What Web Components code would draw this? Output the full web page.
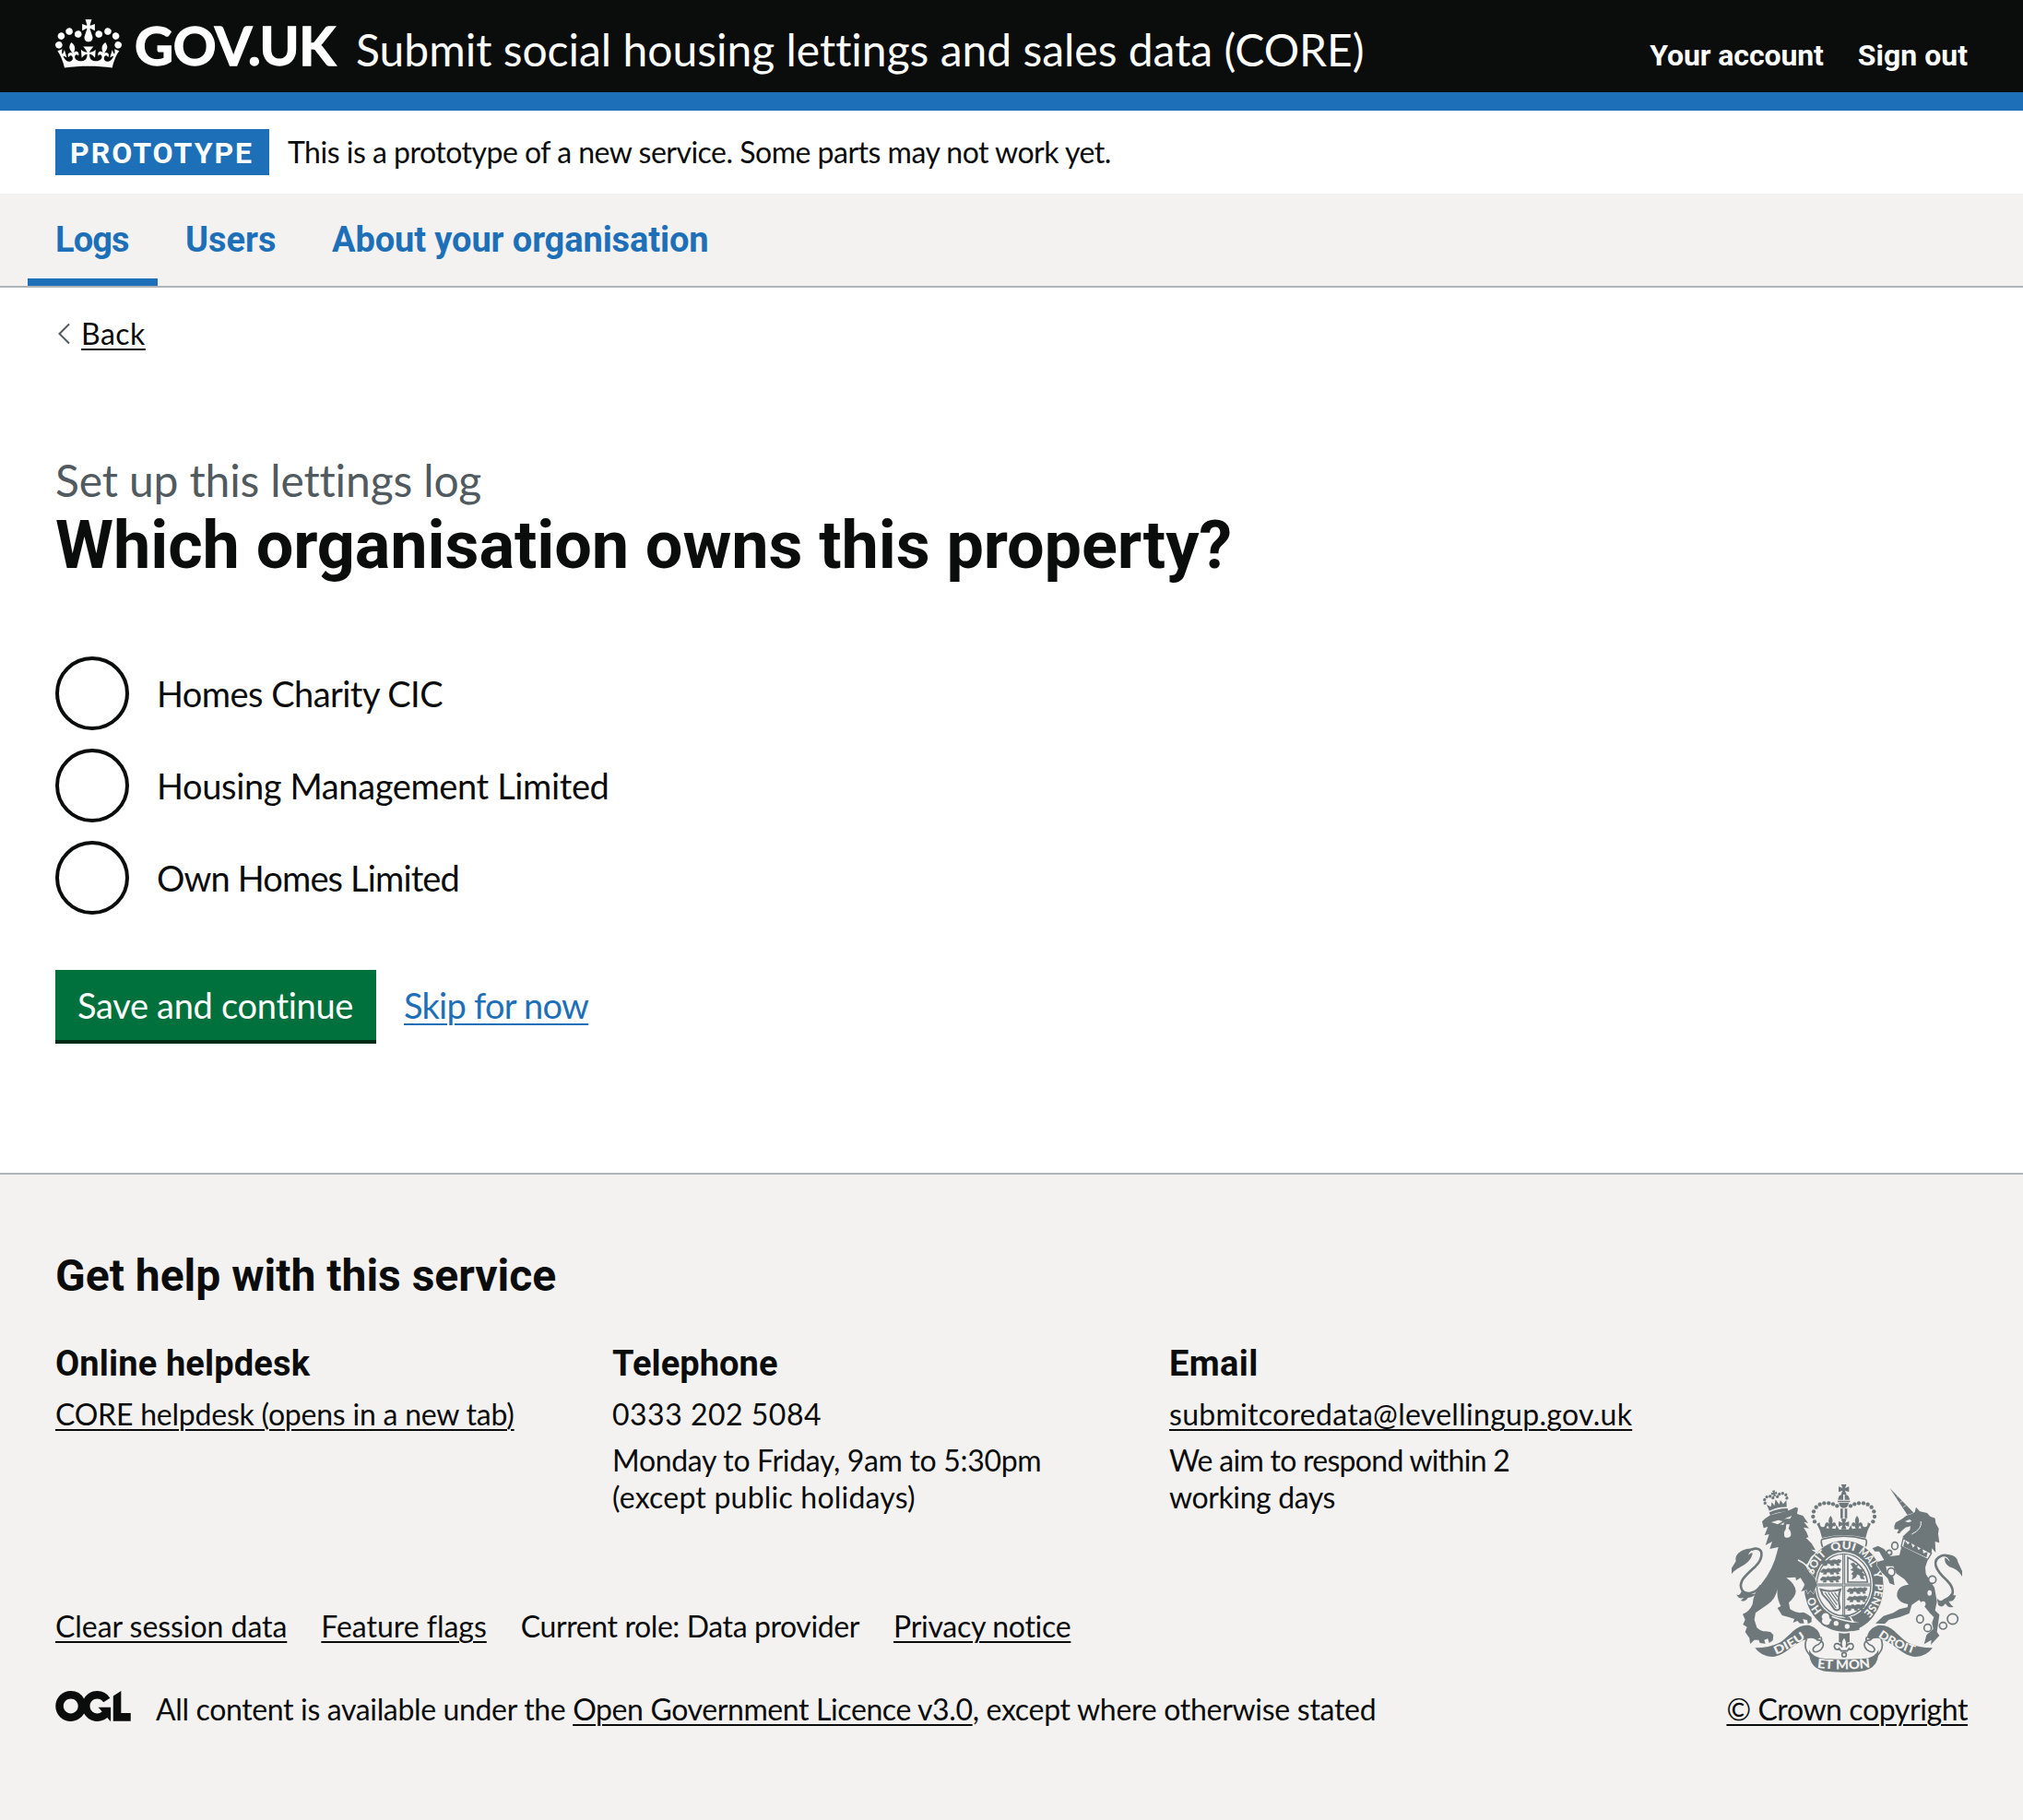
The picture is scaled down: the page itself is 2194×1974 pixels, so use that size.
<!DOCTYPE html>
<html lang="en">
<head>
<meta charset="utf-8">
<title>Which organisation owns this property?</title>
<style>
  html, body { margin: 0; }
  body { background: #fff; color: #0b0c0c; font-family: Lato, Roboto, sans-serif; font-size: 32px; line-height: 40px; font-variant-ligatures: none; }
</style>
</head>
<body>
<core-page></core-page>

<template id="tpl-page">
  <style>
    :host { display: flex; flex-direction: column; min-height: 1974px; }
    main { box-sizing: border-box; height: 960px; padding: 0 60px; display: flex; flex-direction: column; align-items: flex-start; }
    .back { display: flex; align-items: center; gap: 11px; margin-top: 30px; padding-left: 2px; }
    .caption { margin-top: 109px; font-size: 48px; line-height: 60px; letter-spacing: -.15px; color: #505a5f; }
    h1 { margin: 1px 0 0; font: 700 72px/80px Roboto, sans-serif; letter-spacing: -.08px; }
    .radios { display: flex; flex-direction: column; gap: 20px; margin-top: 80px; }
    .actions { display: flex; gap: 30px; margin-top: 60px; align-items: flex-start; }
    button { box-sizing: border-box; width: 348px; height: 80px; margin: 0; padding: 0 1px 1px 0; border: 0; border-bottom: 4px solid #002d18; background: #00703c; color: #fff; font: 38px/50px Lato, sans-serif; letter-spacing: -.3px; }
    .skip { font-size: 38px; line-height: 50px; margin-top: 13px; }
  </style>
  <core-header></core-header>
  <phase-banner tag="PROTOTYPE">This is a prototype of a new service. Some parts may not work yet.</phase-banner>
  <primary-nav></primary-nav>
  <main>
    <div class="back">
      <svg width="15" height="24" viewBox="0 0 15 24"><path d="M13 1.5 2.5 12 13 22.5" fill="none" stroke="#505a5f" stroke-width="2"/></svg>
      <text-link style="letter-spacing:.5px">Back</text-link>
    </div>
    <div class="caption">Set up this lettings log</div>
    <h1>Which organisation owns this property?</h1>
    <div class="radios">
      <radio-item style="letter-spacing:-.55px">Homes Charity CIC</radio-item>
      <radio-item style="letter-spacing:-.37px">Housing Management Limited</radio-item>
      <radio-item style="letter-spacing:-.86px">Own Homes Limited</radio-item>
    </div>
    <div class="actions">
      <button type="button">Save and continue</button>
      <text-link class="skip" style="letter-spacing:-.74px;color:#1d70b8;--offset:5px">Skip for now</text-link>
    </div>
  </main>
  <core-footer></core-footer>
</template>

<template id="tpl-header">
  <style>
    :host { box-sizing: border-box; display: flex; align-items: flex-start; height: 120px; padding: 0 60px; background: #0b0c0c; border-bottom: 20px solid #1d70b8; color: #fff; }
    .crown { margin-top: 21px; }
    .logo { margin: 19px 0 0 14px; width: 222px; font-size: 58px; line-height: 60px; font-weight: 700; letter-spacing: -.3px; -webkit-text-stroke: 1.4px #fff; white-space: nowrap; }
    .name { margin: 24px 0 0 18px; font-size: 48px; line-height: 60px; white-space: nowrap; letter-spacing: -.01px; }
    nav { display: flex; margin: 40px 0 0 auto; gap: 37px; font-family: Roboto, sans-serif; font-weight: 700; }
  </style>
  <svg class="crown" width="72" height="53" viewBox="0 0 132 97"><path fill="#fff" d="M25 30.2c3.5 1.5 7.7-.2 9.1-3.7 1.5-3.6-.2-7.8-3.9-9.2-3.6-1.4-7.6.3-9.1 3.9-1.4 3.5.3 7.5 3.9 9zM9 39.5c3.6 1.5 7.8-.2 9.2-3.7 1.5-3.6-.2-7.8-3.9-9.1-3.6-1.5-7.6.2-9.1 3.8-1.4 3.5.3 7.5 3.8 9zM4.4 57.2c3.5 1.5 7.7-.2 9.1-3.8 1.5-3.6-.2-7.7-3.9-9.1-3.5-1.5-7.6.3-9.1 3.8-1.4 3.5.3 7.6 3.9 9.1zm38.3-21.4c3.5 1.5 7.7-.2 9.1-3.8 1.5-3.6-.2-7.7-3.9-9.1-3.6-1.5-7.6.3-9.1 3.8-1.3 3.6.4 7.7 3.9 9.1zm64.4-5.6c-3.6 1.5-7.8-.2-9.1-3.7-1.5-3.6.2-7.8 3.8-9.2 3.6-1.4 7.7.3 9.2 3.9 1.3 3.5-.4 7.5-3.9 9zm15.9 9.3c-3.6 1.5-7.7-.2-9.1-3.7-1.5-3.6.2-7.8 3.7-9.1 3.6-1.5 7.7.2 9.2 3.8 1.5 3.5-.3 7.5-3.8 9zm4.7 17.7c-3.6 1.5-7.8-.2-9.2-3.8-1.5-3.6.2-7.7 3.9-9.1 3.6-1.5 7.7.3 9.2 3.8 1.3 3.5-.4 7.6-3.9 9.1zM89.3 35.8c-3.6 1.5-7.8-.2-9.2-3.8-1.4-3.6.2-7.7 3.9-9.1 3.6-1.5 7.7.3 9.2 3.8 1.4 3.6-.3 7.7-3.9 9.1zM69.7 17.7l8.9 4.7V9.3l-8.9 2.8c-.2-.3-.5-.6-.9-.9L72.4 0H59.6l3.5 11.2c-.3.3-.6.5-.9.9l-8.8-2.8v13.1l8.8-4.7c.3.3.6.7.9.9l-5 15.4v.1c-.2.8-.4 1.6-.4 2.4 0 4.1 3.1 7.5 7 8.1h.2c.3 0 .7.1 1 .1.4 0 .7 0 1-.1h.2c4-.6 7.1-4.1 7.1-8.1 0-.8-.1-1.7-.4-2.4V34l-5.1-15.4c.4-.2.7-.6 1-.9zM66 92.8c16.9 0 32.8 1.1 47.1 3.2 4-16.9 8.9-26.7 14-33.5l-9.6-3.4c1 4.9 1.1 7.2 0 10.2-1.5-1.4-3-4.3-4.2-8.7L108.6 76c2.8-2 5-3.2 7.5-3.3-4.4 9.4-10 11.9-13.6 11.2-4.3-.8-6.3-4.6-5.6-7.9 1-4.7 5.7-5.9 8-.5 4.3-8.7-3-11.4-7.6-8.8 7.1-7.2 7.9-13.5 2.1-21.1-8 6.1-8.1 12.3-4.5 20.8-4.7-5.4-12.1-2.5-9.5 6.2 3.4-5.2 7.9-2 7.2 3.1-.6 4.3-6.4 7.8-13.5 7.2-10.3-.9-10.9-8-11.2-13.8 2.5-.5 7.1 1.8 11 7.3L80.2 60c-4.1 4.4-8 5.3-12.3 5.4 1.4-4.4 8-11.6 8-11.6H55.5s6.4 7.2 7.9 11.6c-4.2-.1-8-1-12.3-5.4l1.4 16.4c3.9-5.5 8.5-7.7 10.9-7.3-.3 5.8-.9 12.8-11.1 13.8-7.2.6-12.9-2.9-13.5-7.2-.7-5 3.8-8.3 7.1-3.1 2.7-8.7-4.6-11.6-9.4-6.2 3.7-8.5 3.6-14.7-4.6-20.8-5.8 7.6-5 13.9 2.2 21.1-4.7-2.6-11.9.1-7.7 8.8 2.3-5.5 7.1-4.2 8.1.5.7 3.3-1.3 7.1-5.7 7.9-3.5.7-9-1.8-13.5-11.2 2.5.1 4.7 1.3 7.5 3.3l-4.7-15.4c-1.2 4.4-2.7 7.2-4.3 8.7-1.1-3-.9-5.3 0-10.2l-9.5 3.4c5 6.9 9.9 16.7 14 33.5 14.8-2.1 30.8-3.2 47.7-3.2z"/></svg>
  <span class="logo">GOV.UK</span>
  <span class="name">Submit social housing lettings and sales data (CORE)</span>
  <nav><span style="letter-spacing:-.1px">Your account</span><span>Sign out</span></nav>
</template>

<template id="tpl-phase">
  <style>
    :host { box-sizing: border-box; display: flex; align-items: flex-start; height: 90px; padding: 20px 60px; gap: 20px; }
    strong { box-sizing: border-box; width: 232px; height: 50px; padding: 1px 0 0 16px; background: #1d70b8; color: #fff; font-family: Roboto, sans-serif; line-height: 50px; letter-spacing: 2px; }
    .text { padding-top: 1px; line-height: 48px; letter-spacing: -.5px; }
  </style>
  <strong></strong><span class="text"><slot></slot></span>
</template>

<template id="tpl-nav">
  <style>
    :host { box-sizing: border-box; display: flex; height: 102px; padding-left: 30px; background: #f3f2f1; border-bottom: 2px solid #b1b4b6; color: #1d70b8; font: 700 38px/50px Roboto, sans-serif; }
    span { box-sizing: border-box; height: 100px; padding: 25px 0 0 30px; white-space: nowrap; }
    .on { border-bottom: 8px solid #1d70b8; }
  </style>
  <span class="on" style="width:141px;letter-spacing:-.9px">Logs</span>
  <span style="width:159px">Users</span>
  <span style="letter-spacing:-.1px">About your organisation</span>
</template>

<template id="tpl-link">
  <style>
    :host { display: inline-block; white-space: nowrap; }
    a { color: inherit; text-decoration: underline; text-decoration-thickness: 2px; text-underline-offset: var(--offset, 4px); }
  </style>
  <a><slot></slot></a>
</template>

<template id="tpl-radio">
  <style>
    :host { display: flex; align-items: center; gap: 30px; height: 80px; font-size: 38px; line-height: 50px; white-space: nowrap; }
    i { box-sizing: border-box; width: 80px; height: 80px; border: 4px solid #0b0c0c; border-radius: 50%; }
  </style>
  <i></i><span><slot></slot></span>
</template>

<template id="tpl-help">
  <style>
    :host { display: flex; flex-direction: column; }
    h3 { margin: 0 0 10px; font: 700 38px/50px Roboto, sans-serif; }
    .lines { display: flex; flex-direction: column; align-items: flex-start; white-space: nowrap; }
  </style>
  <h3></h3>
  <div class="lines"><slot></slot></div>
</template>

<template id="tpl-footer">
  <style>
    :host { box-sizing: border-box; display: flex; flex-direction: column; flex: 1; padding: 0 60px; background: #f3f2f1; border-top: 2px solid #b1b4b6; white-space: nowrap; }
    h2 { margin: 80px 0 40px; font: 700 48px/60px Roboto, sans-serif; }
    .cols { display: grid; grid-template-columns: 604px 604px 1fr; height: 160px; }
    .gap { height: 10px; }
    .meta { display: flex; justify-content: space-between; align-items: flex-end; height: 260px; }
    .left { display: flex; flex-direction: column; }
    .links { display: flex; gap: 37px; margin-bottom: 50px; }
    .licence { display: flex; align-items: flex-start; gap: 27px; }
    .right { display: flex; flex-direction: column; align-items: flex-end; }
    .right royal-arms { margin: 0 6px 20px 0; }
  </style>
  <h2>Get help with this service</h2>
  <div class="cols">
    <help-column heading="Online helpdesk" spacing=".15px">
      <text-link style="letter-spacing:-.22px">CORE helpdesk (opens in a new tab)</text-link>
    </help-column>
    <help-column heading="Telephone" spacing=".08px">
      <span style="letter-spacing:.5px">0333 202 5084</span><div class="gap"></div>
      <span style="letter-spacing:-.32px">Monday to Friday, 9am to 5:30pm</span>
      <span style="letter-spacing:.21px">(except public holidays)</span>
    </help-column>
    <help-column heading="Email" spacing=".4px">
      <text-link style="letter-spacing:.29px">submitcoredata@levellingup.gov.uk</text-link><div class="gap"></div>
      <span style="letter-spacing:-.72px">We aim to respond within 2</span>
      <span style="letter-spacing:-.4px">working days</span>
    </help-column>
  </div>
  <div class="meta">
    <div class="left">
      <div class="links">
        <text-link style="letter-spacing:-.05px">Clear session data</text-link>
        <text-link style="letter-spacing:-.03px">Feature flags</text-link>
        <span style="letter-spacing:-.4px">Current role: Data provider</span>
        <text-link style="letter-spacing:-.28px">Privacy notice</text-link>
      </div>
      <div class="licence">
        <svg width="82" height="33" viewBox="0 0 483.2 195.7"><path fill="#0b0c0c" d="M421.5 142.8V.1l-50.7 32.3v161.1h112.4v-50.7zm-122.3-9.6A47.12 47.12 0 0 1 221 97.8c0-26 21.1-47.1 47.1-47.1 16.7 0 31.4 8.7 39.7 21.8l42.7-27.2A97.63 97.63 0 0 0 268.1 0c-36.5 0-68.3 20.1-85.1 49.7A98 98 0 0 0 97.8 0C43.9 0 0 43.9 0 97.8s43.9 97.8 97.8 97.8c36.5 0 68.3-20.1 85.1-49.7a97.76 97.76 0 0 0 149.6 25.4l19.4 22.2h3v-87.8h-80l24.3 27.5zM97.8 145c-26 0-47.1-21.1-47.1-47.1s21.1-47.1 47.1-47.1 47.1 21.1 47.1 47.1S123.8 145 97.8 145"/></svg>
        <span><span style="letter-spacing:-.35px">All content is available under the </span><text-link style="letter-spacing:-.39px">Open Government Licence v3.0</text-link><span style="letter-spacing:-.29px">, except where otherwise stated</span></span>
      </div>
    </div>
    <div class="right">
      <royal-arms></royal-arms>
      <text-link style="letter-spacing:-.4px">© Crown copyright</text-link>
    </div>
  </div>
</template>

<template id="tpl-arms">
  <style>
    :host { display: block; width: 250px; height: 204px; }
    svg { display: block; }
    text { font-family: Lato, sans-serif; font-weight: 900; }
  </style>
  <svg width="250" height="204" viewBox="54 60 750 612">
    <defs>
      <path id="ring" d="M419 503A102 116 0 0 1 419 271A102 116 0 0 1 419 503"/>
      <path id="dieu" d="M198 614Q248 594 302 554"/>
      <path id="droit" d="M530 555Q580 592 658 615"/>
      <path id="mon" d="M332 657Q420 667 510 655"/>
      <path id="cross" d="M-9-17h18L4-4 17-9V9L4 4 9 17H-9L-4 4-17 9V-9L-4-4z"/>
      <path id="lily" d="M0-22C8-12 8-4 4 5C8-3 18-2 17 7C16 14 10 14 8 10C8 15 5 16 4 20H-4C-5 16-8 15-8 10C-10 14-16 14-17 7C-18-2-8-3-4 5C-8-4-8-12 0-22z"/>
      <path id="beast" d="M-33 3L-25-6-14-4-8-8 0-5 10-8 20-6 24-9 33-6 30 2 24 3 28 10 20 11 18 5 8 5 10 11 0 11-2 5-12 4-14 11-24 11-20 4-28 6z"/>
    </defs>
    <g fill="#6e787b">
      <!-- central crown -->
      <use href="#cross" x="419" y="76"/>
      <path d="M400 110Q401 92 417 92V110zM422 92Q437 94 438 110H422zM399 113H439V118H399zM403 120H435Q433 137 419 137Q405 137 403 120zM408 139H416V170H408zM422 139H430V170H422z"/>
      <use href="#cross" x="419" y="189"/><use href="#lily" x="376" y="184"/><use href="#lily" x="462" y="184"/>
      <g id="beads"><circle cx="324" cy="181" r="6.5"/><circle cx="319" cy="165" r="6.5"/><circle cx="321" cy="148" r="6.5"/><circle cx="329" cy="134" r="6.5"/><circle cx="341" cy="125" r="6.5"/><circle cx="355" cy="121" r="6.5"/><circle cx="370" cy="121" r="6.5"/><circle cx="384" cy="124" r="6.5"/><circle cx="397" cy="130" r="6.5"/></g>
      <use href="#beads" transform="matrix(-1 0 0 1 838 0)"/>
      <path d="M331 188L341 184Q340 199 351 199Q359 198 358 189Q367 194 362 203Q376 201 391 205Q397 197 391 190Q399 194 404 207H434Q440 194 447 190Q441 197 447 205Q462 201 476 203Q471 194 480 189Q479 198 487 199Q498 199 497 184L507 188Q494 210 490 234Q419 216 348 234Q344 210 331 188z"/>
      <path d="M350 238Q419 219 488 238Q497 241 490 262M350 238Q341 241 350 264" fill="none" stroke="#6e787b" stroke-width="5"/>
      <!-- garter -->
      <ellipse cx="419" cy="391" rx="129" ry="148"/>
    </g>
    <ellipse cx="419" cy="387" rx="94" ry="107" fill="#f3f2f1"/>
    <g fill="#f3f2f1" font-size="36">
      <text><textPath href="#ring" startOffset="80" textLength="54" lengthAdjust="spacingAndGlyphs">HO</textPath></text>
      <text><textPath href="#ring" startOffset="203" textLength="80" lengthAdjust="spacingAndGlyphs">SOIT</textPath></text>
      <text><textPath href="#ring" startOffset="302" textLength="76" lengthAdjust="spacingAndGlyphs">QUI</textPath></text>
      <text><textPath href="#ring" startOffset="391" textLength="64" lengthAdjust="spacingAndGlyphs">MAL</textPath></text>
      <text><textPath href="#ring" startOffset="470">Y</textPath></text>
      <text><textPath href="#ring" startOffset="510" textLength="104" lengthAdjust="spacingAndGlyphs">PENSE</textPath></text>
    </g>
    <path d="M375 475L348 492M440 492L463 528M380 490Q420 506 466 510" fill="none" stroke="#f3f2f1" stroke-width="5"/>
    <path d="M362 495Q410 518 466 508L470 533Q420 546 372 524z" fill="#6e787b"/>
    <circle cx="394" cy="512" r="8" fill="#f3f2f1"/><circle cx="430" cy="522" r="8" fill="#f3f2f1"/>
    <g fill="none" stroke="#6e787b">
      <ellipse cx="419" cy="387" rx="88" ry="101" stroke-width="4"/>
      <path d="M419 286V488M331 387H507" stroke-width="9"/>
      <path d="M419 286V488M331 387H507" stroke="#f3f2f1" stroke-width="2"/>
      <path d="M432 298V378H496Q490 325 432 298z" stroke-width="5"/>
      <path d="M344 402Q375 412 408 402Q398 425 406 462Q402 474 388 466Q372 440 350 418z" stroke-width="6"/>
      <path d="M358 412L394 462M368 412L397 452M379 412L399 440M389 412L399 426" stroke-width="3.5"/>
    </g>
    <g fill="#6e787b" stroke="#6e787b" stroke-width="2">
      <use href="#beast" x="377" y="313"/><use href="#beast" x="376" y="341"/><use href="#beast" x="375" y="367"/>
      <use href="#beast" x="462" y="404"/><use href="#beast" x="462" y="431"/><use href="#beast" x="455" y="459"/>
      <path d="M442 318L452 316 458 324 466 322 460 330 470 336 484 338 478 346 488 356 480 358 486 368 474 366 472 356 462 352 458 362 446 368 450 356 444 352 452 342 442 338 450 332z"/>
      <path d="M411 486H440L428 494z"/>
    </g>
    <path d="M352 478Q370 472 374 488Q372 496 384 500Q376 506 374 516Q362 524 352 516Q342 510 347 498Q340 488 352 478z" fill="#f3f2f1" stroke="#6e787b" stroke-width="5"/>
    <!-- lion -->
    <path fill="#6e787b" stroke="#f3f2f1" stroke-width="3" paint-order="stroke" d="M153 181L162 172 180 160 240 145 262 134 270 137 267 156 286 162 303 186 289 182 306 203 288 200 298 216 304 232 296 234 314 252 327 274 313 272 328 282 312 296 302 316 294 324 308 348 325 366 333 388 324 402 320 416 310 404 302 416 298 403 280 409 292 386 278 364 264 373 262 362 232 364Q262 385 263 408Q262 424 240 445L244 466Q258 476 275 478L288 476 300 482 314 492 314 508 302 514 300 502 286 498 290 512 276 512 268 504 254 510 258 498 240 492 218 486 203 462 214 456Q200 430 203 400Q198 432 172 450L132 478 128 500 136 526Q150 540 164 538L180 540 190 550 188 568 176 576 172 562 160 566 164 578 146 576 142 566 128 566 114 579 112 560 98 540 104 524 91 516 98 500 90 482Q112 474 122 450Q126 410 150 385Q190 335 202 280L206 264 178 270 186 246 164 258 176 222 161 226 172 198 158 202z"/>
    <path d="M183 183L206 176 220 180 204 190zM226 172L250 162 244 172zM232 190L243 190 239 204Q250 214 246 228Q236 238 226 230Q222 214 230 206zM212 190L226 184 222 192z" fill="#f3f2f1"/>
    <path d="M270 306Q304 322 316 350" fill="none" stroke="#f3f2f1" stroke-width="5"/>
    <path d="M150 388C135 412 102 424 88 404C72 376 104 352 132 326C154 304 158 276 140 270Q130 267 118 273" fill="none" stroke="#6e787b" stroke-width="8"/>
    <path d="M128 269C94 266 62 284 68 310L54 332V352C72 326 112 326 122 286C122 280 116 282 108 290Q112 276 128 269zM70 418Q80 424 86 408L110 414Q134 420 136 412Q124 430 108 428 96 444 84 438L94 428Q76 436 70 418z" fill="#6e787b"/>
    <!-- lion's crown -->
    <g transform="rotate(-13 204 140)" fill="#6e787b">
      <path d="M174 145Q204 137 236 145V156Q204 148 176 154zM176 140L172 118 184 128 190 114 196 127 204 108 212 127 219 114 225 128 238 118 234 140Q204 132 176 140z"/>
      <use href="#cross" transform="translate(204 88) scale(.55)"/>
      <g><circle cx="168" cy="112" r="5"/><circle cx="169" cy="101" r="5"/><circle cx="178" cy="94" r="5"/><circle cx="189" cy="94" r="5"/><circle cx="197" cy="101" r="5"/><circle cx="212" cy="101" r="5"/><circle cx="220" cy="94" r="5"/><circle cx="231" cy="94" r="5"/><circle cx="240" cy="101" r="5"/><circle cx="241" cy="112" r="5"/></g>
    </g>
    <!-- unicorn -->
    <g fill="#6e787b" stroke="#f3f2f1" stroke-width="3" paint-order="stroke">
      <path d="M569 73L650 156 630 166z"/>
      <path d="M583 196L588 184 606 174 622 162 640 156 650 150 654 134 666 148 690 153 700 164 716 170 718 186 728 204 726 222 730 250 716 246 718 282 706 268 704 286 618 240 610 230 634 208 636 196 620 200 606 212 600 220 592 218 598 206 584 206z"/>
      <path d="M610 250L600 290 570 294 550 270 530 260 512 268 520 278 534 278 550 306 528 312 526 322 542 346 562 366 568 382 584 388 580 362 560 346 556 326 580 326 590 350 616 368 630 386Q590 390 592 424Q596 444 628 450L626 460 600 466 580 478 548 488 522 512 552 514 566 500 600 492 632 480 640 452 664 436 700 480 712 492 706 510 710 530 688 550 680 580 704 566 702 582 730 552 722 540 730 484 716 470 722 440 714 396 686 352 684 330 692 306z"/>
    </g>
    <path d="M600 94L592 100M612 112L602 118M622 128L612 134" stroke="#f3f2f1" stroke-width="2" fill="none"/>
    <path d="M618 180L634 174 640 180 628 184z" fill="#f3f2f1"/>
    <path d="M670 180Q674 206 640 222" fill="none" stroke="#f3f2f1" stroke-width="3"/>
    <path d="M612 236L704 284 692 304 606 262z" fill="#f3f2f1" stroke="#6e787b" stroke-width="4"/>
    <path d="M612 262L618 242 627 256 636 246 644 266 654 254 662 274 674 264 678 284 692 280 688 298z" fill="#6e787b"/>
    <path d="M742 442C786 426 778 396 754 372C716 338 702 306 738 292Q752 288 768 296" fill="none" stroke="#6e787b" stroke-width="8"/>
    <path d="M740 291Q784 282 790 312L804 342V360Q792 336 762 328Q744 316 748 298Q760 304 764 312Q760 296 740 291zM722 430Q730 446 746 432Q760 428 768 414Q776 424 784 420Q778 444 760 440 768 454 776 458 758 464 750 448 738 464 726 452z" fill="#6e787b"/>
    <g fill="none" stroke="#6e787b" stroke-width="5">
      <ellipse cx="585" cy="260" rx="10" ry="12"/><circle cx="567" cy="282" r="8"/><ellipse cx="573" cy="345" rx="12" ry="13"/><circle cx="707" cy="370" r="12" fill="#f3f2f1"/><ellipse cx="667" cy="498" rx="11" ry="13"/><circle cx="692" cy="527" r="12"/><ellipse cx="742" cy="520" rx="12" ry="11"/><circle cx="773" cy="498" r="17"/>
    </g>
    <ellipse cx="698" cy="413" rx="7" ry="9" fill="#f3f2f1"/><ellipse cx="677" cy="449" rx="8" ry="9" fill="#f3f2f1"/>
    <!-- pendant and ribbon -->
    <path d="M403 543Q420 547 438 543V574H403z" fill="#6e787b"/>
    <path d="M420 556C432 570 430 580 426 590C434 574 450 574 450 588C448 598 440 600 436 594L430 602H410L404 594C400 600 390 598 388 588C388 574 404 574 414 590C408 580 408 570 420 556z" fill="#f3f2f1" stroke="#6e787b" stroke-width="5"/>
    <circle cx="420" cy="614" r="7" fill="#f3f2f1" stroke="#6e787b" stroke-width="5"/>
    <g id="ribbon">
      <path d="M130 592Q150 620 186 621C230 618 252 578 296 564Q316 556 330 566L344 558Q338 528 308 519C262 512 240 560 208 576Q176 592 130 592z" fill="#6e787b"/>
      <path d="M298 563C288 586 296 606 316 622M330 566C354 566 358 584 344 598Q330 608 322 604Q314 596 326 586Q354 574 344 556" fill="none" stroke="#6e787b" stroke-width="5"/>
    </g>
    <use href="#ribbon" transform="matrix(-1 0 0 1 838 0)"/>
    <path d="M306 598Q318 626 360 627Q419 632 478 627Q520 626 532 598Q534 664 470 669Q419 674 368 669Q304 664 306 598z" fill="#6e787b"/>
    <g fill="#f3f2f1">
      <text font-size="37"><textPath href="#dieu" textLength="112" lengthAdjust="spacingAndGlyphs">DIEU</textPath></text>
      <text font-size="37"><textPath href="#droit" textLength="130" lengthAdjust="spacingAndGlyphs">DROIT</textPath></text>
      <text font-size="42"><textPath href="#mon" textLength="174" lengthAdjust="spacingAndGlyphs">ET MON</textPath></text>
    </g>
  </svg>
</template>

<script>
  const define = (name, tpl, setup) => customElements.define(name, class extends HTMLElement {
    connectedCallback() {
      if (this.shadowRoot) return;
      const root = this.attachShadow({ mode: 'open' });
      root.append(document.getElementById(tpl).content.cloneNode(true));
      if (setup) setup(this, root);
    }
  });
  define('text-link', 'tpl-link');
  define('radio-item', 'tpl-radio');
  define('royal-arms', 'tpl-arms');
  define('help-column', 'tpl-help', (host, root) => {
    const h = root.querySelector('h3');
    h.textContent = host.getAttribute('heading');
    h.style.letterSpacing = host.getAttribute('spacing');
  });
  define('phase-banner', 'tpl-phase', (host, root) => {
    root.querySelector('strong').textContent = host.getAttribute('tag');
  });
  define('primary-nav', 'tpl-nav');
  define('core-header', 'tpl-header');
  define('core-footer', 'tpl-footer');
  define('core-page', 'tpl-page');
</script>
</body>
</html>
